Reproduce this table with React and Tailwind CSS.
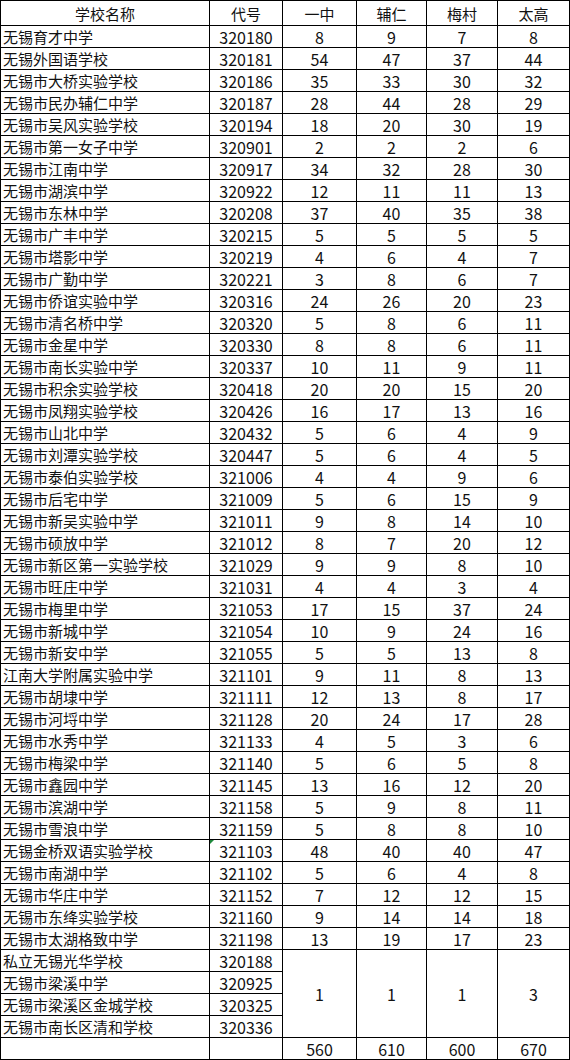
import React from 'react'

const rows = [
  ['无锡育才中学', '320180', 8, 9, 7, 8],
  ['无锡外国语学校', '320181', 54, 47, 37, 44],
  ['无锡市大桥实验学校', '320186', 35, 33, 30, 32],
  ['无锡市民办辅仁中学', '320187', 28, 44, 28, 29],
  ['无锡市吴风实验学校', '320194', 18, 20, 30, 19],
  ['无锡市第一女子中学', '320901', 2, 2, 2, 6],
  ['无锡市江南中学', '320917', 34, 32, 28, 30],
  ['无锡市湖滨中学', '320922', 12, 11, 11, 13],
  ['无锡市东林中学', '320208', 37, 40, 35, 38],
  ['无锡市广丰中学', '320215', 5, 5, 5, 5],
  ['无锡市塔影中学', '320219', 4, 6, 4, 7],
  ['无锡市广勤中学', '320221', 3, 8, 6, 7],
  ['无锡市侨谊实验中学', '320316', 24, 26, 20, 23],
  ['无锡市清名桥中学', '320320', 5, 8, 6, 11],
  ['无锡市金星中学', '320330', 8, 8, 6, 11],
  ['无锡市南长实验中学', '320337', 10, 11, 9, 11],
  ['无锡市积余实验学校', '320418', 20, 20, 15, 20],
  ['无锡市凤翔实验学校', '320426', 16, 17, 13, 16],
  ['无锡市山北中学', '320432', 5, 6, 4, 9],
  ['无锡市刘潭实验学校', '320447', 5, 6, 4, 5],
  ['无锡市泰伯实验学校', '321006', 4, 4, 9, 6],
  ['无锡市后宅中学', '321009', 5, 6, 15, 9],
  ['无锡市新吴实验中学', '321011', 9, 8, 14, 10],
  ['无锡市硕放中学', '321012', 8, 7, 20, 12],
  ['无锡市新区第一实验学校', '321029', 9, 9, 8, 10],
  ['无锡市旺庄中学', '321031', 4, 4, 3, 4],
  ['无锡市梅里中学', '321053', 17, 15, 37, 24],
  ['无锡市新城中学', '321054', 10, 9, 24, 16],
  ['无锡市新安中学', '321055', 5, 5, 13, 8],
  ['江南大学附属实验中学', '321101', 9, 11, 8, 13],
  ['无锡市胡埭中学', '321111', 12, 13, 8, 17],
  ['无锡市河埒中学', '321128', 20, 24, 17, 28],
  ['无锡市水秀中学', '321133', 4, 5, 3, 6],
  ['无锡市梅梁中学', '321140', 5, 6, 5, 8],
  ['无锡市鑫园中学', '321145', 13, 16, 12, 20],
  ['无锡市滨湖中学', '321158', 5, 9, 8, 11],
  ['无锡市雪浪中学', '321159', 5, 8, 8, 10],
  ['无锡金桥双语实验学校', '321103', 48, 40, 40, 47],
  ['无锡市南湖中学', '321102', 5, 6, 4, 8],
  ['无锡市华庄中学', '321152', 7, 12, 12, 15],
  ['无锡市东绛实验学校', '321160', 9, 14, 14, 18],
  ['无锡市太湖格致中学', '321198', 13, 19, 17, 23],
]

const grouped = [
  ['私立无锡光华学校', '320188'],
  ['无锡市梁溪中学', '320925'],
  ['无锡市梁溪区金城学校', '320325'],
  ['无锡市南长区清和学校', '320336'],
]

const cell = 'border-r border-b border-black flex items-center h-[22px] leading-none'
const num = `${cell} justify-center text-[16px]`

export default function App() {
  return (
    <div className="w-[570px] h-[1060px] bg-white text-[#111] text-[15px]"
      style={{ fontFamily: '"Noto Sans CJK SC", "Noto Sans", sans-serif' }}>
      <div className="grid grid-cols-[209px_73px_74px_70px_71px_72px] border-l border-t border-black">
        {/* header */}
        {['学校名称', '代号', '一中', '辅仁', '梅村', '太高'].map(h => (
          <div key={h} className="border-r border-b border-black flex items-center justify-center h-[25px] leading-none">{h}</div>
        ))}

        {rows.map(([name, code, a, b, c, d]) => (
          <React.Fragment key={code}>
            <div className={`${cell} pl-[2px]`}>{name}</div>
            <div className={`${num} relative`}>
              {code === '321103' && (
                <span className="absolute left-0 top-0 w-0 h-0 border-t-[4px] border-r-[4px] border-t-[#1e8a3c] border-r-transparent" />
              )}
              {code}
            </div>
            <div className={num}>{a}</div>
            <div className={num}>{b}</div>
            <div className={num}>{c}</div>
            <div className={num}>{d}</div>
          </React.Fragment>
        ))}

        {/* merged block */}
        <div className="col-start-1 row-span-4 grid grid-rows-4">
          {grouped.map(([name]) => (
            <div key={name} className={`${cell} pl-[2px]`}>{name}</div>
          ))}
        </div>
        <div className="row-span-4 grid grid-rows-4">
          {grouped.map(([, code]) => (
            <div key={code} className={num}>{code}</div>
          ))}
        </div>
        {[1, 1, 1, 3].map((v, i) => (
          <div key={i} className="border-r border-b border-black flex items-center justify-center row-span-4 text-[16px]">{v}</div>
        ))}

        {/* totals */}
        <div className={cell}></div>
        <div className={cell}></div>
        {[560, 610, 600, 670].map(v => (
          <div key={v} className={num}>{v}</div>
        ))}
      </div>
    </div>
  )
}
